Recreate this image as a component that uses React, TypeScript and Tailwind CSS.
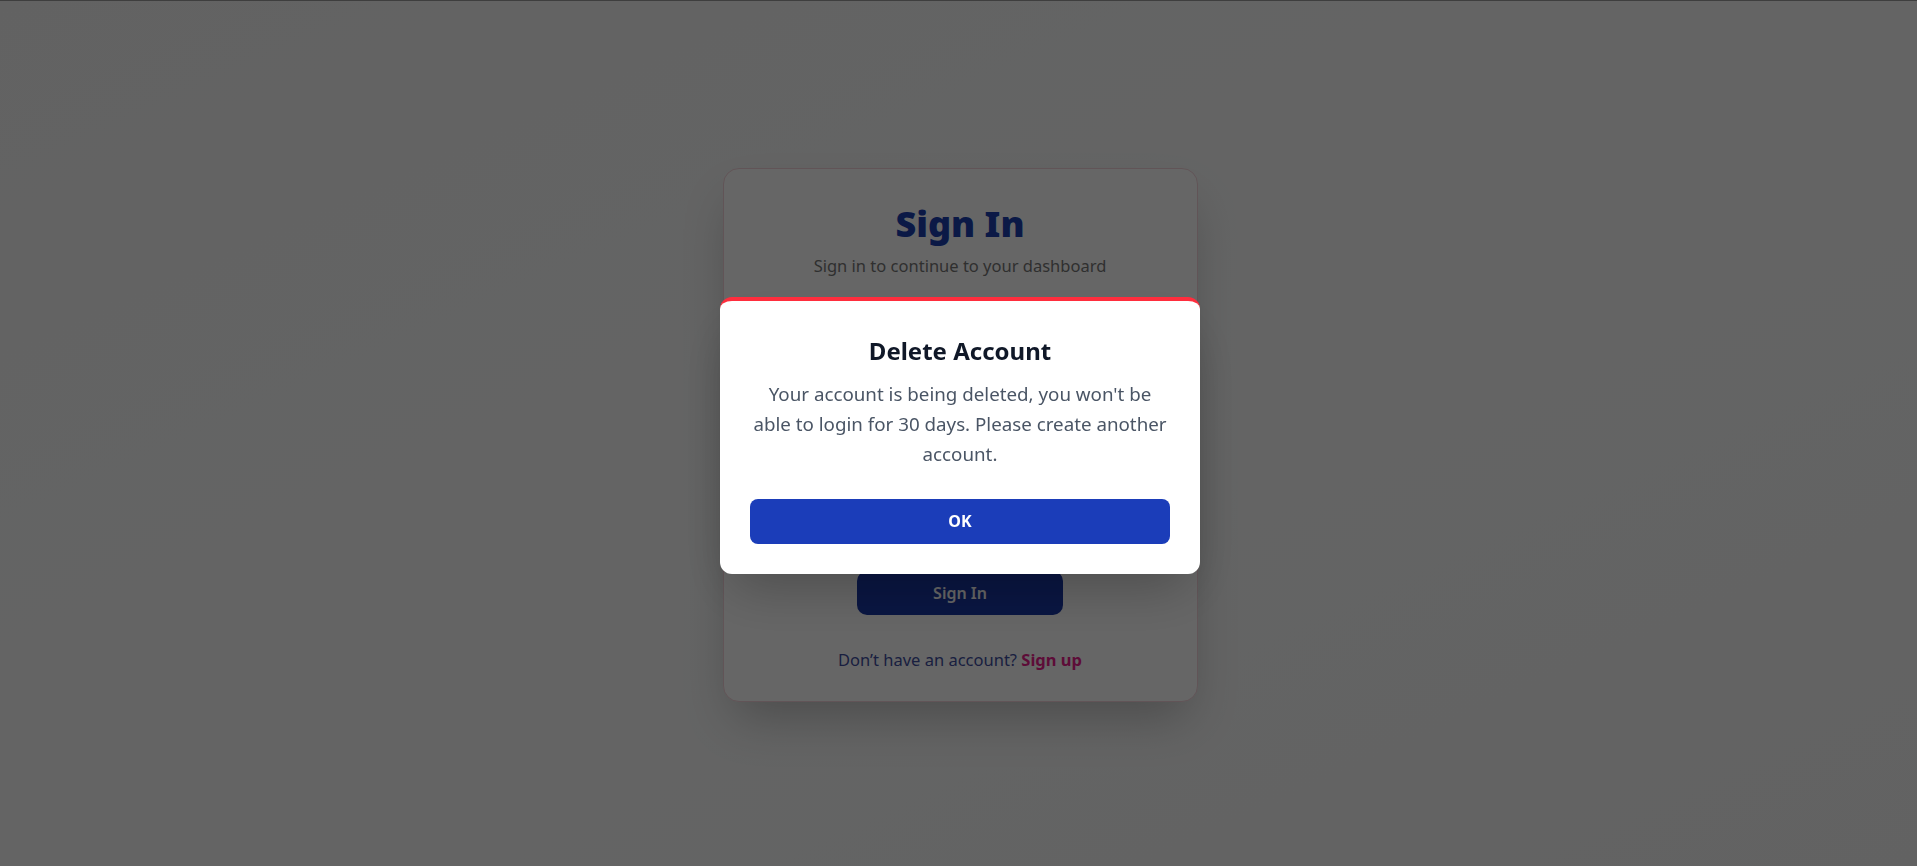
import { useState } from "react";

export default function App() {
  const [showNotice, setShowNotice] = useState(true);

  return (
    <div className="flex min-h-screen items-center justify-center border-t border-[#9c9c9c] bg-linear-to-br from-[#f6f6f6] via-[#fafbfb] to-[#f6f6f6] pl-[3px] font-['Segoe_UI','Noto_Sans',sans-serif]">
      {/* sign in card */}
      <div className="mt-[3px] w-[475px] rounded-2xl border border-[#f3d3da] bg-white px-[30px] pt-[35px] pb-[29px] text-center shadow-2xl">
        <h1 className="text-4xl leading-10 font-black text-[#1c3fb0]">Sign In</h1>
        <p className="mt-2.5 text-[16.5px] text-[#777777]">
          Sign in to continue to your dashboard
        </p>

        <form className="mt-8 flex flex-col gap-6 text-left" onSubmit={(e) => e.preventDefault()}>
          <label className="flex flex-col gap-1.5 text-sm font-semibold text-[#334155]">
            Email
            <input
              type="email"
              placeholder="you@example.com"
              className="h-12 rounded-lg border border-gray-300 px-3 text-base font-normal"
            />
          </label>
          <label className="flex flex-col gap-1.5 text-sm font-semibold text-[#334155]">
            Password
            <input
              type="password"
              placeholder="••••••••"
              className="h-12 rounded-lg border border-gray-300 px-3 text-base font-normal"
            />
          </label>
          <div className="flex items-center justify-between text-sm">
            <span className="text-gray-500">Remember me</span>
            <span className="font-semibold text-[#e91e8c]">Forgot password?</span>
          </div>
          <button
            type="submit"
            className="mx-auto mt-5 h-11 w-[206px] rounded-[10px] bg-[#1937a5] text-base font-semibold text-white"
          >
            Sign In
          </button>
        </form>

        <p className="mt-[33px] text-[16.5px] text-[#3f4fa0]">
          Don’t have an account?{" "}
          <a href="#" className="font-bold text-[#e91e8c]">
            Sign up
          </a>
        </p>
      </div>

      {/* account notice */}
      {showNotice && (
        <div className="fixed inset-0 flex items-center justify-center bg-black/60 pl-[3px]">
          <div className="mt-[4px] w-[480px] rounded-xl border-t-4 border-[#ff2d3d] bg-white px-[30px] pt-[34px] pb-[30px] text-center shadow-2xl">
            <h2 className="text-2xl leading-8 font-bold text-gray-900">Delete Account</h2>
            <p className="mt-3 text-[18.75px] leading-[30px] text-gray-600">
              Your account is being deleted, you won't be able to login for 30 days. Please
              create another account.
            </p>
            <button
              onClick={() => setShowNotice(false)}
              className="mt-[30px] h-[45px] w-full rounded-lg bg-[#1b3db9] text-base font-bold text-white"
            >
              OK
            </button>
          </div>
        </div>
      )}
    </div>
  );
}
